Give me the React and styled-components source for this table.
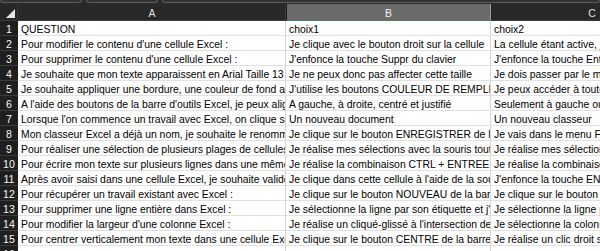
import React from "react";
import styled, { createGlobalStyle } from "styled-components";

const rows = [
  ["QUESTION", "choix1", "choix2"],
  ["Pour modifier le contenu d'une cellule Excel :", "Je clique avec le bouton droit sur la cellule", "La cellule étant active, je tape"],
  ["Pour supprimer le contenu d'une cellule Excel :", "J'enfonce la touche Suppr du clavier", "J'enfonce la touche Entrée"],
  ["Je souhaite que mon texte apparaissent en Arial Taille 13 dans une cellule", "Je ne peux donc pas affecter cette taille", "Je dois passer par le menu Format"],
  ["Je souhaite appliquer une bordure, une couleur de fond ainsi", "J'utilise les boutons COULEUR DE REMPLISSAGE", "Je peux accéder à toutes ces options"],
  ["A l'aide des boutons de la barre d'outils Excel, je peux aligner", "A gauche, à droite, centré et justifié", "Seulement à gauche ou à droite"],
  ["Lorsque l'on commence un travail avec Excel, on clique sur", "Un nouveau document", "Un nouveau classeur"],
  ["Mon classeur Excel a déjà un nom, je souhaite le renommer", "Je clique sur le bouton ENREGISTRER de la barre d'outils", "Je vais dans le menu FICHIER"],
  ["Pour réaliser une sélection de plusieurs plages de cellules Excel", "Je réalise mes sélections avec la souris tout en", "Je réalise mes sélections"],
  ["Pour écrire mon texte sur plusieurs lignes dans une même cellule", "Je réalise la combinaison CTRL + ENTREE pour", "Je réalise la combinaison ALT"],
  ["Après avoir saisi dans une cellule Excel, je souhaite valider", "Je clique dans cette cellule à l'aide de la souris", "J'enfonce la touche ENTREE"],
  ["Pour récupérer un travail existant avec Excel :", "Je clique sur le bouton NOUVEAU de la barre d'outils", "Je clique sur le bouton OUVRIR"],
  ["Pour supprimer une ligne entière dans Excel :", "Je sélectionne la ligne par son étiquette et j'appuie", "Je sélectionne la ligne par"],
  ["Pour modifier la largeur d'une colonne Excel :", "Je réalise un cliqué-glissé à l'intersection des", "Je sélectionne la colonne"],
  ["Pour centrer verticalement mon texte dans une cellule Excel", "Je clique sur le bouton CENTRE de la barre d'outils", "Je réalise un clic droit sur"],
  ["", "", ""],
];

const columns = [
  { name: "A", selected: false },
  { name: "B", selected: true },
  { name: "C", selected: false },
];

function App() {
  return (
    <>
      <GlobalStyle />
      <Window>
        <TopStrip>
          <BarEnd w="82px" />
          <BarEnd w="72px" />
          <BarEnd w="auto" grow />
        </TopStrip>
        <Sheet>
          <Corner>
            <svg width="9" height="9" viewBox="0 0 9 9">
              <polygon points="9,0 9,9 0,9" fill="#e8e8e8" />
            </svg>
          </Corner>
          {columns.map((col) => (
            <ColHeader key={col.name} selected={col.selected}>
              {col.name}
            </ColHeader>
          ))}

          {rows.map((row, i) => (
            <React.Fragment key={i}>
              <RowHeader>{i + 1}</RowHeader>
              {row.map((text, j) => (
                <Cell key={j}>{text}</Cell>
              ))}
            </React.Fragment>
          ))}
        </Sheet>
      </Window>
    </>
  );
}

const GlobalStyle = createGlobalStyle`
  html, body {
    margin: 0;
    padding: 0;
    background: #2b2b2b;
    overflow: hidden;
  }
  * {
    box-sizing: border-box;
  }
`;

const Window = styled.div`
  width: 600px;
  height: 251px;
  overflow: hidden;
  background: #2b2b2b;
  font-family: "Liberation Sans", Arial, sans-serif;
`;

const TopStrip = styled.div`
  height: 4px;
  display: flex;
  gap: 4px;
  background: #2b2b2b;
`;

const BarEnd = styled.div`
  width: ${(p) => p.w};
  flex: ${(p) => (p.grow ? 1 : "none")};
  height: 3px;
  border: 1px solid #5c5c5c;
  border-top: none;
  border-radius: 0 0 3px 3px;
  background: #333333;
`;

const Sheet = styled.div`
  display: grid;
  grid-template-columns: 18px 268px 205px 202px;
  grid-template-rows: 17px;
  grid-auto-rows: 15px;
`;

const Corner = styled.div`
  background: #262626;
  border-right: 1px solid #3a3a3a;
  border-bottom: 1px solid #3a3a3a;
  display: flex;
  align-items: flex-end;
  justify-content: flex-end;
  padding: 0 2px 2px 0;
`;

const ColHeader = styled.div`
  background: ${(p) => (p.selected ? "#6a6a6a" : "#292929")};
  color: ${(p) => (p.selected ? "#f4f4f4" : "#e2e2e2")};
  border-left: 1px solid ${(p) => (p.selected ? "#1c1c1c" : "transparent")};
  border-right: 1px solid ${(p) => (p.selected ? "#9a9a9a" : "#3a3a3a")};
  border-bottom: 1px solid ${(p) => (p.selected ? "#3f8a5c" : "#3a3a3a")};
  font-size: 10.4px;
  text-align: center;
  line-height: 11px;
  padding-top: 4px;
`;

const RowHeader = styled.div`
  background: #1f1f1f;
  color: #f6f6f6;
  border-bottom: 1px solid #3c3c3c;
  font-size: 10.6px;
  text-align: center;
  line-height: 11px;
  padding-top: 3px;
  overflow: hidden;
`;

const Cell = styled.div`
  background: #ffffff;
  color: #000000;
  border-right: 1px solid #d6d6d6;
  border-bottom: 1px solid #e1e1e1;
  font-size: 10.4px;
  line-height: 11px;
  padding: 3px 0 0 3px;
  white-space: nowrap;
  overflow: hidden;
`;

export default App;
